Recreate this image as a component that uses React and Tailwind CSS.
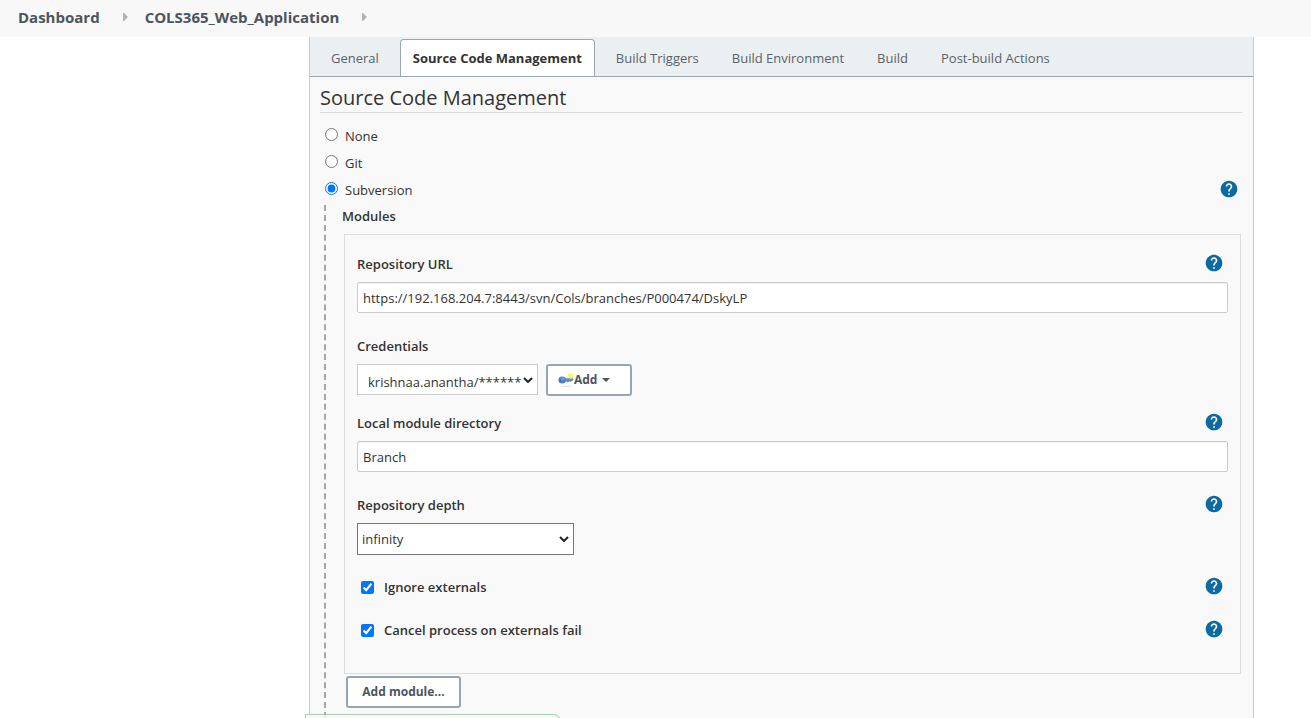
import { useState } from "react";

const tabs = ["General", "Source Code Management", "Build Triggers", "Build Environment", "Build", "Post-build Actions"];

function HelpButton({ topic }) {
    return (
        <button type="button" aria-label={`Help for ${topic}`} className="mb-0.5 shrink-0 cursor-pointer">
            <svg viewBox="0 0 24 24" className="block size-5 fill-[#0b6aa2]">
                <path d="M12 2C6.48 2 2 6.48 2 12s4.48 10 10 10 10-4.48 10-10S17.52 2 12 2z" />
                <path className="fill-white" d="M13 19h-2v-2h2v2zm2.07-7.75l-.9.92C13.45 12.9 13 13.5 13 15h-2v-.5c0-1.1.45-2.1 1.17-2.83l1.24-1.26c.37-.36.59-.86.59-1.41 0-1.1-.9-2-2-2s-2 .9-2 2H8c0-2.21 1.79-4 4-4s4 1.79 4 4c0 .88-.36 1.68-.93 2.25z" />
            </svg>
        </button>
    );
}

function BreadcrumbArrow() {
    return (
        <svg viewBox="0 0 5 8" className="mr-[17px] ml-[23px] h-2 w-[5px] fill-[#b4b4b4]">
            <path d="M0 0h1L5 4L1 8H0z" />
        </svg>
    );
}

function KeyIcon() {
    return (
        <svg viewBox="0 0 16 16" className="size-4">
            <ellipse cx="8" cy="14.2" rx="6" ry="0.8" fill="#e6e6e6" />
            <path d="M6 6.3h8.6l0.8 1.3-0.8 1.5h-1.2l-0.7 0.8-0.9-0.8-0.9 0.8H9l-0.8-0.8H6z" fill="#5b86b8" />
            <path d="M7 6.6h7.4v0.8H7z" fill="#8fb0d6" />
            <circle cx="12.7" cy="3.8" r="2.6" fill="#fbf64a" />
            <circle cx="12.7" cy="3.8" r="1" fill="#fffdb0" />
            <ellipse cx="4.2" cy="8" rx="3.8" ry="3.6" fill="#4c80bf" />
            <ellipse cx="4.6" cy="6.8" rx="2.2" ry="1.6" fill="#719dd0" />
            <circle cx="2.2" cy="8" r="0.7" fill="#31598f" />
        </svg>
    );
}

function Field({ id, label, help, className = "", children }) {
    return (
        <div className={className}>
            <div className="mb-[9px] flex h-[18px] items-center justify-between pr-1">
                <label htmlFor={id} className="font-semibold">{label}</label>
                {help && <HelpButton topic={label} />}
            </div>
            {children}
        </div>
    );
}

function CheckField({ id, label, className = "" }) {
    return (
        <div className={`flex h-[18px] items-center pr-1 pl-1 ${className}`}>
            <input id={id} type="checkbox" defaultChecked className="mr-[10px] size-[13px] accent-[#0075ff]" />
            <label htmlFor={id} className="flex-1 font-semibold">{label}</label>
            <HelpButton topic={label} />
        </div>
    );
}

function SelectArrow() {
    return (
        <svg viewBox="0 0 10 6" className="pointer-events-none absolute top-[13px] right-[5px] h-1.5 w-[10px] fill-none stroke-[#222] stroke-2">
            <path d="M1 1l4 4 4-4" />
        </svg>
    );
}

export default function App() {
    const [scm, setScm] = useState("Subversion");

    return (
        <div className="relative flex h-screen flex-col overflow-hidden bg-white font-['Open_Sans','Noto_Sans',sans-serif] text-[13px] leading-[18px] text-[#333]">
            <nav className="flex h-[37px] shrink-0 items-center bg-[#f8f8f8] pb-1 pl-[18px] text-[15px] font-bold text-[#4d545d]">
                <a href="#dashboard">Dashboard</a>
                <BreadcrumbArrow />
                <a href="#job">COLS365_Web_Application</a>
                <BreadcrumbArrow />
            </nav>

            <main className="mr-[57px] ml-[309px] flex flex-1 flex-col border-x border-[#c8cccf] bg-[#f9f9f9]">
                <div className="flex h-10 shrink-0 items-end border-b border-[#98a9b1] bg-[#eaeff2] pl-[10px]">
                    {tabs.map((tab) => (
                        <button
                            key={tab}
                            type="button"
                            className={
                                tab === "Source Code Management"
                                    ? "mr-[10px] ml-[10px] h-[37px] w-[195px] rounded-t border border-b-0 border-[#98a9b1] bg-white font-bold text-[#333]"
                                    : "h-[37px] px-[11px] text-[#5c636b] not-first:mr-[11px]"
                            }
                        >
                            {tab}
                        </button>
                    ))}
                </div>

                <div className="flex flex-1 flex-col px-[10px]">
                    <h1 className="flex h-9 items-center border-b border-[#ddd] pt-1.5 text-xl font-medium">Source Code Management</h1>

                    <fieldset className="pt-[9px] pb-px">
                        {["None", "Git", "Subversion"].map((name) => (
                            <div key={name} className="flex h-[27px] items-center justify-between pr-1">
                                <label className="flex items-center">
                                    <input
                                        type="radio"
                                        name="scm"
                                        checked={scm === name}
                                        onChange={() => setScm(name)}
                                        className="mr-[7px] mb-0.5 ml-[5px] size-[13px] accent-[#0075ff]"
                                    />
                                    {name}
                                </label>
                                {name === "Subversion" && <HelpButton topic={name} />}
                            </div>
                        ))}
                    </fieldset>

                    <div className="mt-px ml-1 flex-1 border-l-2 border-dashed border-[#a6a6a6] pl-[18px]">
                        <h2 className="-ml-0.5 h-[29px] pt-0.5 font-semibold">Modules</h2>
                        <section className="mr-0.5 border border-[#ddd] px-3 pt-5 pb-[34px]">
                            <Field id="url" label="Repository URL" help>
                                <input
                                    id="url"
                                    defaultValue="https://192.168.204.7:8443/svn/Cols/branches/P000474/DskyLP"
                                    className="block h-[31px] w-full rounded-xs border border-[#ccc] bg-white px-[5px] inset-shadow-2xs"
                                />
                            </Field>

                            <Field id="credentials" label="Credentials" className="mt-6">
                                <div className="flex gap-2">
                                    <div className="relative w-[181px]">
                                        <select id="credentials" className="block h-[31px] w-full appearance-none border border-[#ccc] bg-white pt-1 pl-[10px]">
                                            <option>krishnaa.anantha/******</option>
                                        </select>
                                        <SelectArrow />
                                    </div>
                                    <button type="button" className="flex h-8 w-[86px] items-center rounded-[3px] border-2 border-[#98a6b1] bg-white pl-[10px] text-xs font-bold text-[#4d545d]">
                                        <KeyIcon />
                                        Add
                                        <svg viewBox="0 0 8 4" className="ml-[5px] h-1 w-2 fill-[#4d545d]">
                                            <path d="M0 0h8L4 4z" />
                                        </svg>
                                    </button>
                                </div>
                            </Field>

                            <Field id="directory" label="Local module directory" help className="mt-[18px]">
                                <input
                                    id="directory"
                                    defaultValue="Branch"
                                    className="block h-[31px] w-full rounded-xs border border-[#ccc] bg-white px-[5px] inset-shadow-2xs"
                                />
                            </Field>

                            <Field id="depth" label="Repository depth" help className="mt-6">
                                <div className="relative w-[217px]">
                                    <select id="depth" className="block h-8 w-full appearance-none border border-[#767676] bg-white pl-1">
                                        <option>infinity</option>
                                    </select>
                                    <SelectArrow />
                                </div>
                            </Field>

                            <CheckField id="ignore" label="Ignore externals" className="mt-[23px]" />
                            <CheckField id="cancel" label="Cancel process on externals fail" className="mt-[25px]" />
                        </section>
                        <button type="button" className="mt-0.5 ml-0.5 h-8 w-[115px] rounded-[3px] border-2 border-[#98a6b1] bg-white text-xs font-bold text-[#4d545d]">
                            Add module...
                        </button>
                    </div>
                </div>
            </main>

            <div className="absolute -bottom-1 left-[305px] h-2 w-[256px] rounded-tr-lg border border-[#a9cdb9] bg-[#fafaf2]/80" />
        </div>
    );
}
